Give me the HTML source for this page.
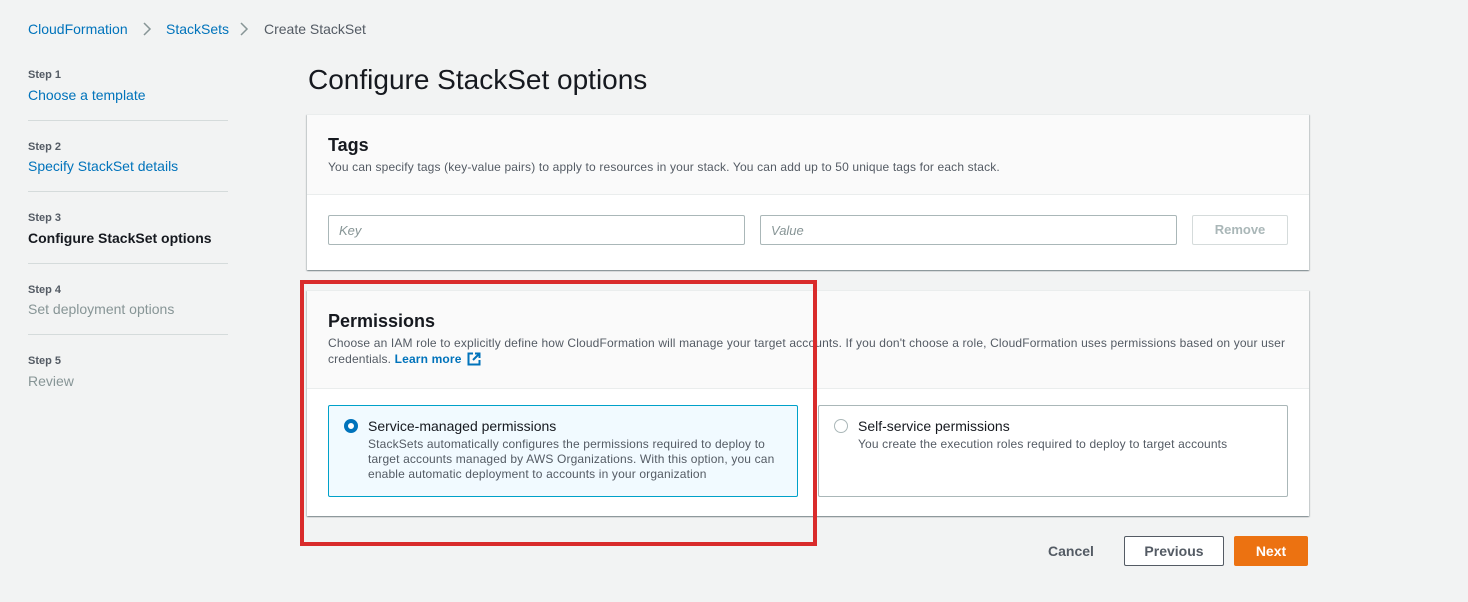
<!DOCTYPE html>
<html><head><style>
*{box-sizing:border-box;margin:0;padding:0}
body{width:1468px;height:602px;background:#f2f3f3;font-family:"Liberation Sans",sans-serif;position:relative;overflow:hidden;color:#16191f}
.a{position:absolute;white-space:nowrap}
.blue{color:#0073bb}
.grey{color:#545b64}
.sl{font-size:11px;color:#545b64;font-weight:bold}
.hr{position:absolute;left:28px;width:200px;height:1px;background:#d5dbdb}
.card{position:absolute;left:307px;width:1002px;background:#fff;box-shadow:0 1px 1px 0 rgba(0,28,36,.3),1px 1px 1px 0 rgba(0,28,36,.15),-1px 1px 1px 0 rgba(0,28,36,.15);border-top:1px solid #eaeded}
.hd{position:absolute;left:0;top:0;width:100%;background:#fafafa;border-bottom:1px solid #eaeded}
.inp{position:absolute;height:30px;border:1px solid #aab7b8;border-radius:2px;font-style:italic;color:#879596;font-size:13px;padding:7px 10px}
.desc{font-size:12px;color:#545b64;letter-spacing:0.15px}
</style></head><body>
<div class="a blue" style="left:28px;top:21px;font-size:14px">CloudFormation</div>
<svg class="a" style="left:141px;top:21px" width="12" height="16" viewBox="0 0 12 16"><path d="M3 2l6 6-6 6" fill="none" stroke="#879596" stroke-width="1.5"/></svg>
<div class="a blue" style="left:166px;top:21px;font-size:14px">StackSets</div>
<svg class="a" style="left:238px;top:21px" width="12" height="16" viewBox="0 0 12 16"><path d="M3 2l6 6-6 6" fill="none" stroke="#879596" stroke-width="1.5"/></svg>
<div class="a grey" style="left:264px;top:21px;font-size:14px">Create StackSet</div>

<div class="a sl" style="left:28px;top:69px">Step 1</div>
<div class="a blue" style="left:28px;top:87px;font-size:14px">Choose a template</div>
<div class="hr" style="top:120px"></div>
<div class="a sl" style="left:28px;top:141px">Step 2</div>
<div class="a blue" style="left:28px;top:158px;font-size:14px">Specify StackSet details</div>
<div class="hr" style="top:191px"></div>
<div class="a sl" style="left:28px;top:212px">Step 3</div>
<div class="a" style="left:28px;top:230px;font-size:14px;font-weight:bold">Configure StackSet options</div>
<div class="hr" style="top:263px"></div>
<div class="a sl" style="left:28px;top:284px">Step 4</div>
<div class="a" style="left:28px;top:301px;font-size:14px;color:#879596">Set deployment options</div>
<div class="hr" style="top:334px"></div>
<div class="a sl" style="left:28px;top:355px">Step 5</div>
<div class="a" style="left:28px;top:373px;font-size:14px;color:#879596">Review</div>

<div class="a" style="left:308px;top:64px;font-size:28px">Configure StackSet options</div>

<div class="card" style="top:114px;height:156px">
 <div class="hd" style="height:80px"></div>
 <div class="a" style="left:21px;top:20px;font-size:18px;font-weight:bold">Tags</div>
 <div class="a desc" style="left:21px;top:45px">You can specify tags (key-value pairs) to apply to resources in your stack. You can add up to 50 unique tags for each stack.</div>
 <div class="inp" style="left:21px;top:100px;width:417px">Key</div>
 <div class="inp" style="left:453px;top:100px;width:417px">Value</div>
 <div class="a" style="left:885px;top:100px;width:96px;height:30px;border:1px solid #d5dbdb;border-radius:2px;color:#aab7b8;font-weight:bold;font-size:13px;text-align:center;line-height:28px">Remove</div>
</div>

<div class="card" style="top:290px;height:226px">
 <div class="hd" style="height:98px"></div>
 <div class="a" style="left:21px;top:20px;font-size:18px;font-weight:bold">Permissions</div>
 <div class="a desc" style="left:21px;top:45px">Choose an IAM role to explicitly define how CloudFormation will manage your target accounts. If you don't choose a role, CloudFormation uses permissions based on your user</div>
 <div class="a desc" style="left:21px;top:61px">credentials. <b style="color:#0073bb">Learn more</b> <svg width="14" height="14" viewBox="0 0 14 14" style="vertical-align:-3px;margin-left:2px"><path d="M6 1.5H1.5v11h11V8" fill="none" stroke="#0073bb" stroke-width="2"/><path d="M8 1.5h4.5V6M12.5 1.5L6 8" fill="none" stroke="#0073bb" stroke-width="2"/></svg></div>
 <div class="a" style="left:21px;top:114px;width:470px;height:92px;border:1px solid #00a1c9;background:#f1faff;border-radius:2px"></div>
 <div class="a" style="left:37px;top:128px;width:14px;height:14px;border-radius:50%;border:4px solid #0073bb;background:#fff"></div>
 <div class="a" style="left:61px;top:127px;font-size:14px">Service-managed permissions</div>
 <div class="a desc" style="left:61px;top:146px;line-height:15px">StackSets automatically configures the permissions required to deploy to<br>target accounts managed by AWS Organizations. With this option, you can<br>enable automatic deployment to accounts in your organization</div>
 <div class="a" style="left:511px;top:114px;width:470px;height:92px;border:1px solid #aab7b8;border-radius:2px"></div>
 <div class="a" style="left:527px;top:128px;width:14px;height:14px;border-radius:50%;border:1px solid #aab7b8;background:#fff"></div>
 <div class="a" style="left:551px;top:127px;font-size:14px">Self-service permissions</div>
 <div class="a desc" style="left:551px;top:146px">You create the execution roles required to deploy to target accounts</div>
</div>

<div class="a" style="left:300px;top:280px;width:517px;height:266px;border:4px solid #d92b2b"></div>

<div class="a" style="left:1048px;top:543px;font-size:14px;font-weight:bold;color:#545b64">Cancel</div>
<div class="a" style="left:1124px;top:536px;width:100px;height:30px;border:1px solid #545b64;border-radius:2px;background:#fff;font-weight:bold;font-size:14px;color:#545b64;text-align:center;line-height:28px">Previous</div>
<div class="a" style="left:1234px;top:536px;width:74px;height:30px;background:#ec7211;border-radius:2px;font-weight:bold;font-size:14px;color:#fff;text-align:center;line-height:30px">Next</div>
</body></html>
